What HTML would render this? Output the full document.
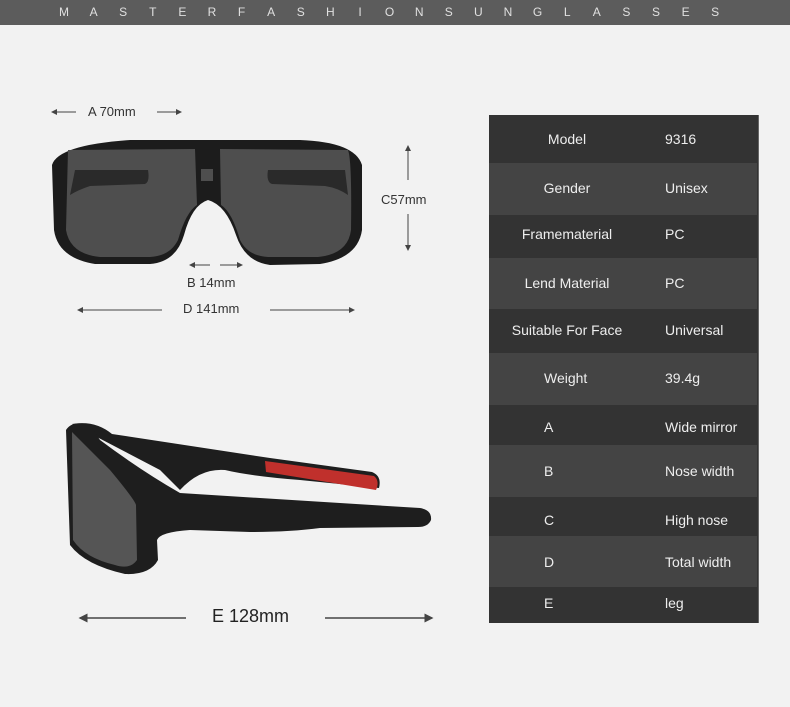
<!DOCTYPE html>
<html><head><style>
body{margin:0;width:790px;height:707px;background:#f2f2f2;position:relative;overflow:hidden;font-family:"Liberation Sans",sans-serif}
.hd{position:absolute;left:0;top:0;width:790px;height:25px;background:#5c5c5c}
.hd span{position:absolute;top:5px;color:#e0e0e0;font-size:12px;width:10px;text-align:center}
.r{position:absolute;left:489px;width:268px;color:#eee;font-size:14px}
.r .a{position:absolute;width:156px;text-align:center;left:0}
.r .l{position:absolute;left:55px}
.r .b{position:absolute;left:176px}
.t{position:absolute;font-size:13px;color:#333}
</style></head><body>
<div class="hd" id="hd"></div>
<script>
var s="MASTERFASHIONSUNGLASSES",h=document.getElementById('hd');
for(var i=0;i<s.length;i++){var e=document.createElement('span');e.textContent=s[i];e.style.left=(59+i*29.6)+'px';h.appendChild(e);}
</script>
<div style="position:absolute;left:489px;top:115px;width:269px;height:508px;background:#333;border-right:1px solid #666"></div>
<div class="r" style="top:115px;height:48px;background:#333"><span class="a" style="top:16px">Model</span><span class="b" style="top:16px">9316</span></div>
<div class="r" style="top:163px;height:52px;background:#444"><span class="a" style="top:17px">Gender</span><span class="b" style="top:17px">Unisex</span></div>
<div class="r" style="top:215px;height:43px;background:#333"><span class="a" style="top:11px">Framematerial</span><span class="b" style="top:11px">PC</span></div>
<div class="r" style="top:258px;height:51px;background:#444"><span class="a" style="top:17px">Lend Material</span><span class="b" style="top:17px">PC</span></div>
<div class="r" style="top:309px;height:44px;background:#333"><span class="a" style="top:13px">Suitable For Face</span><span class="b" style="top:13px">Universal</span></div>
<div class="r" style="top:353px;height:52px;background:#444"><span class="l" style="top:17px">Weight</span><span class="b" style="top:17px">39.4g</span></div>
<div class="r" style="top:405px;height:40px;background:#333"><span class="l" style="top:14px">A</span><span class="b" style="top:14px">Wide mirror</span></div>
<div class="r" style="top:445px;height:52px;background:#444"><span class="l" style="top:18px">B</span><span class="b" style="top:18px">Nose width</span></div>
<div class="r" style="top:497px;height:39px;background:#333"><span class="l" style="top:15px">C</span><span class="b" style="top:15px">High nose</span></div>
<div class="r" style="top:536px;height:51px;background:#444"><span class="l" style="top:18px">D</span><span class="b" style="top:18px">Total width</span></div>
<div class="r" style="top:587px;height:36px;background:#333"><span class="l" style="top:8px">E</span><span class="b" style="top:8px">leg</span></div>

<svg style="position:absolute;left:0;top:0" width="480" height="707">
<defs><marker id="m" markerWidth="6" markerHeight="6" refX="5" refY="3" orient="auto"><path d="M0,0L6,3L0,6z" fill="#444"/></marker></defs>
<g stroke="#444" stroke-width="1" marker-end="url(#m)">
<line x1="76" y1="112" x2="52" y2="112"/><line x1="157" y1="112" x2="181" y2="112"/>
<line x1="408" y1="180" x2="408" y2="146"/><line x1="408" y1="214" x2="408" y2="250"/>
<line x1="210" y1="265" x2="190" y2="265"/><line x1="220" y1="265" x2="242" y2="265"/>
<line x1="162" y1="310" x2="78" y2="310"/><line x1="270" y1="310" x2="354" y2="310"/>
<line x1="186" y1="618" x2="80" y2="618" stroke-width="1.5"/><line x1="325" y1="618" x2="432" y2="618" stroke-width="1.5"/>
</g>
<!-- front glasses -->
<path d="M52,165 Q58,145 130,140 L300,140 Q355,142 362,165 L362,230 Q358,258 320,264 L270,265 Q245,262 236,235 Q226,205 208,200 Q192,205 184,235 Q176,262 150,264 L95,264 Q58,258 54,230 Z" fill="#1c1c1c"/>
<path d="M68,150 L195,149 L197,205 Q186,212 178,240 Q170,256 150,257 L100,257 Q70,254 66,230 Z" fill="#4e4e4e"/>
<path d="M220,149 L348,150 Q352,160 351,230 Q348,254 318,257 L268,257 Q248,256 240,240 Q232,212 221,205 Z" fill="#4e4e4e"/>
<rect x="201" y="169" width="12" height="12" fill="#4e4e4e"/>
<path d="M75,170 L148,170 Q150,182 145,184 L90,186 Q78,190 70,195 Z" fill="#2a2a2a"/>
<path d="M268,170 L345,170 L348,195 Q338,188 325,186 L272,184 Q266,182 268,170 Z" fill="#2a2a2a"/>
<!-- side glasses -->
<path d="M72,424 Q95,420 112,434 L270,458 L372,472 Q382,476 379,488 L300,480 Q250,476 225,470 Q200,468 180,490 L160,470 Z" fill="#1e1e1e"/>
<path d="M265,461 L374,476 Q380,481 376,490 L266,472 Z" fill="#c0302c"/>
<path d="M100,440 Q140,470 180,493 L420,508 Q432,510 431,520 Q428,527 418,527 L320,528 Q290,532 250,532 L190,530 Q160,532 157,540 L158,560 Q150,575 125,574 Q85,565 70,545 L66,430 Q72,420 90,425 Z" fill="#1e1e1e"/>
<path d="M72,432 Q85,445 110,470 Q135,500 136,505 L137,560 Q130,570 115,565 Q85,558 73,540 Z" fill="#555"/>
</svg>
<div class="t" style="left:88px;top:104px">A 70mm</div>
<div class="t" style="left:381px;top:192px">C57mm</div>
<div class="t" style="left:187px;top:275px">B 14mm</div>
<div class="t" style="left:183px;top:301px">D 141mm</div>
<div class="t" style="left:212px;top:606px;font-size:18px;color:#222">E 128mm</div>
</body></html>
